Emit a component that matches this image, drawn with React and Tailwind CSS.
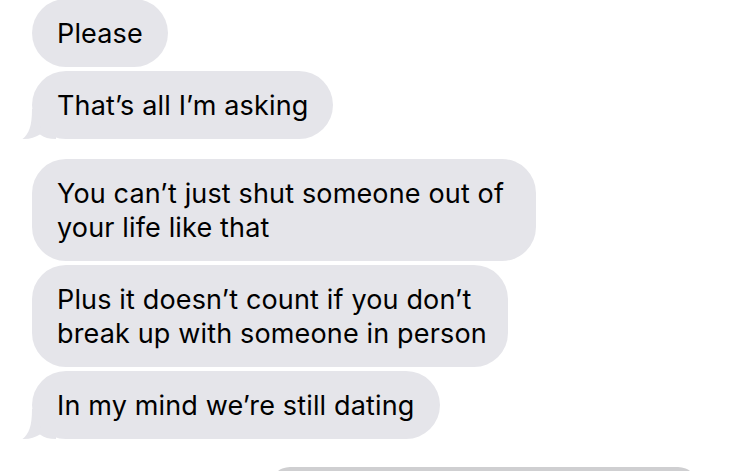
import React from "react";

function Tail() {
  return (
    <svg
      className="absolute -left-[10px] bottom-0"
      width="34"
      height="30"
      viewBox="0 0 34 30"
      style={{ overflow: "visible" }}
    >
      <path
        d="M10 0 C10 17 7 25 0.5 30 C7 30.5 13 28.5 18 25.5 C22 28.5 27 30 34 30 L34 0 Z"
        fill="#e5e5ea"
      />
    </svg>
  );
}

function Bubble({ children, tail, className = "" }) {
  return (
    <div className={`relative self-start ${className}`}>
      {tail && <Tail />}
      <div className="relative whitespace-nowrap rounded-[34px] bg-[#e5e5ea] px-[25px] pt-[18px] pb-[16px] text-[27px] leading-[34px] tracking-[0.15px] text-black">
        {children}
      </div>
    </div>
  );
}

export default function App() {
  return (
    <div
      className="relative h-[471px] w-[750px] overflow-hidden bg-white"
      style={{ fontFamily: "Inter, 'Liberation Sans', sans-serif" }}
    >
      <div className="-mt-[1px] flex flex-col pl-[32px]">
        <Bubble>Please</Bubble>
        <Bubble tail className="mt-[4px]">That’s all I’m asking</Bubble>
        <Bubble className="mt-[20px] w-[504px]">
          You can’t just shut someone out of
          <br />
          your life like that
        </Bubble>
        <Bubble className="mt-[4px] w-[476px]">
          Plus it doesn’t count if you don’t
          <br />
          break up with someone in person
        </Bubble>
        <Bubble tail className="mt-[4px]">In my mind we’re still dating</Bubble>
        <div className="mt-[28px] ml-[238px] h-[20px] w-[428px] rounded-t-[30px] bg-[#cfcfd1]" />
      </div>
    </div>
  );
}
